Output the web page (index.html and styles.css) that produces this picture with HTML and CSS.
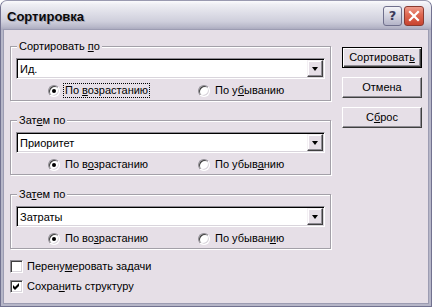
FILE: index.html
```html
<!DOCTYPE html>
<html lang="ru">
<head>
<meta charset="utf-8">
<title>Сортировка</title>
<link rel="stylesheet" href="styles.css">
</head>
<body>
<div class="window">
  <div class="titlebar">
    <span class="title">Сортировка</span>
    <div class="caption-buttons">
      <span class="cbtn help">?</span>
      <span class="cbtn close"><svg width="12" height="12" viewBox="0 0 12 12"><path d="M2 2 L10 10 M10 2 L2 10" stroke="#fff" stroke-width="2.2" stroke-linecap="square"/></svg></span>
    </div>
  </div>
  <div class="client">
    <div class="left">
      <fieldset class="group">
        <legend>Сортировать <u>п</u>о</legend>
        <div class="combo"><span class="combo-text">Ид.</span><span class="drop"><i class="tri"></i></span></div>
        <div class="radios">
          <label class="opt first"><span class="radio on"></span><span class="focus">По <u>в</u>озрастанию</span></label>
          <label class="opt"><span class="radio"></span><span class="txt">По у<u>б</u>ыванию</span></label>
        </div>
      </fieldset>
      <fieldset class="group">
        <legend>Зат<u>е</u>м по</legend>
        <div class="combo"><span class="combo-text">Приоритет</span><span class="drop"><i class="tri"></i></span></div>
        <div class="radios">
          <label class="opt first"><span class="radio on"></span><span class="txt">По в<u>о</u>зрастанию</span></label>
          <label class="opt"><span class="radio"></span><span class="txt">По убыв<u>а</u>нию</span></label>
        </div>
      </fieldset>
      <fieldset class="group">
        <legend>За<u>т</u>ем по</legend>
        <div class="combo"><span class="combo-text">Затраты</span><span class="drop"><i class="tri"></i></span></div>
        <div class="radios">
          <label class="opt first"><span class="radio on"></span><span class="txt">По во<u>з</u>растанию</span></label>
          <label class="opt"><span class="radio"></span><span class="txt">По убыван<u>и</u>ю</span></label>
        </div>
      </fieldset>
      <div class="checks">
        <label class="chk"><span class="box"></span><span class="txt">Перену<u>м</u>еровать задачи</span></label>
        <label class="chk"><span class="box on"><svg width="7" height="7" viewBox="0 0 7 7"><path d="M0 2 L2 4 L6 0 L6 3 L2 7 L0 5 Z" fill="#000"/></svg></span><span class="txt">Сохра<u>н</u>ить структуру</span></label>
      </div>
    </div>
    <div class="right">
      <button class="btn default">Сортироват<u>ь</u></button>
      <button class="btn">Отмена</button>
      <button class="btn">С<u>б</u>рос</button>
    </div>
  </div>
</div>
</body>
</html>
```

FILE: styles.css
```css
html, body {
  margin: 0;
  padding: 0;
  background: #ffffff;
}

body {
  font-family: "Liberation Sans", Arial, sans-serif;
  font-size: 11px;
  color: #000;
}

.window {
  width: 432px;
  height: 307px;
  box-sizing: border-box;
  border: 1px solid #727290;
  border-top-color: #9a9ab0;
  border-radius: 7px 7px 0 0;
  background: #b6b6c8;
  display: flex;
  flex-direction: column;
  overflow: hidden;
}

.titlebar {
  height: 29px;
  flex: none;
  display: flex;
  align-items: center;
  justify-content: space-between;
  padding: 0 7px 0 6px;
  background: linear-gradient(#fbfbfd 0%, #eeeef3 12%, #dcdce6 45%, #cfcfdc 70%, #babacb 88%, #a6a6bb 100%);
}

.title {
  font-family: "Liberation Sans", Arial, sans-serif;
  font-weight: bold;
  font-size: 13px;
  color: #0a0a0a;
  text-shadow: 1px 1px 0 #a8a8b8;
  padding-top: 1px;
}

.caption-buttons {
  display: flex;
  gap: 2px;
}

.cbtn {
  width: 19px;
  height: 20px;
  box-sizing: border-box;
  border-radius: 3px;
  display: flex;
  align-items: center;
  justify-content: center;
}

.help {
  border: 1px solid #6f6f8c;
  background: linear-gradient(#f4f4f8 0%, #d6d6e2 45%, #b4b4c8 100%);
  color: #3a3a5a;
  font-family: "DejaVu Sans", sans-serif;
  font-weight: bold;
  font-size: 13px;
  line-height: 1;
}

.close {
  width: 20px;
  border: 1px solid #8a3a30;
  background: linear-gradient(#ee9c8c 0%, #e06a54 40%, #c84430 100%);
}

.client {
  flex: 1;
  margin: 0 3px 3px;
  background: #e6dfe7;
  box-shadow: 0 0 0 1px #9c9cb2;
  display: flex;
  padding: 0 6px;
}

.left {
  width: 322px;
  padding-top: 10px;
  display: flex;
  flex-direction: column;
}

.group {
  margin: 0 0 13px 0;
  padding: 5px 4px 3px 5px;
  width: 321px;
  box-sizing: border-box;
  border: 1px solid #a3a0a8;
  box-shadow: inset 1px 1px 0 #ffffff, 1px 1px 0 #ffffff;
  min-width: 0;
}

.group legend {
  padding: 0 2px;
  margin-left: 1px;
  line-height: 13px;
  height: 13px;
  background: #e6dfe7;
}

.combo {
  height: 21px;
  width: 309px;
  box-sizing: border-box;
  background: #fff;
  border: 1px solid;
  border-color: #8f8c94 #ffffff #ffffff #8f8c94;
  box-shadow: inset 1px 1px 0 #000000, inset -1px -1px 0 #d9d5dc;
  display: flex;
  align-items: center;
  justify-content: space-between;
  padding: 1px;
}

.combo-text {
  padding-left: 2px;
  padding-top: 1px;
  line-height: 13px;
}

.drop {
  width: 16px;
  height: 17px;
  box-sizing: border-box;
  background: #e6dfe7;
  border: 1px solid;
  border-color: #f4f0f4 #404040 #404040 #f4f0f4;
  box-shadow: inset -1px -1px 0 #8f8c94, inset 1px 1px 0 #ffffff;
  display: flex;
  align-items: center;
  justify-content: center;
}

.tri {
  width: 0;
  height: 0;
  border-left: 3.5px solid transparent;
  border-right: 3.5px solid transparent;
  border-top: 4px solid #000;
  margin-top: 1px;
}

.radios {
  display: flex;
  margin-top: 5px;
  padding-left: 32px;
  height: 13px;
  align-items: center;
}

.opt {
  display: flex;
  align-items: center;
  gap: 5px;
}

.opt.first {
  width: 150px;
}

.radio {
  width: 12px;
  height: 12px;
  box-sizing: border-box;
  border-radius: 50%;
  background: #fff;
  border: 1px solid;
  border-color: #8f8c94 #ffffff #ffffff #8f8c94;
  box-shadow: inset 1px 1px 0 #404040, inset -1px -1px 0 #d9d5dc;
  position: relative;
  flex: none;
}

.radio.on::after {
  content: "";
  position: absolute;
  left: 3px;
  top: 3px;
  width: 4px;
  height: 4px;
  border-radius: 50%;
  background: #000;
}

.focus, .txt {
  line-height: 13px;
}

.focus {
  outline: 1px dotted #000;
  outline-offset: 0px;
  padding: 0 1px;
  margin-left: -1px;
}

.checks {
  display: flex;
  flex-direction: column;
  gap: 7px;
  margin-top: -2px;
}

.chk {
  display: flex;
  align-items: center;
  gap: 4px;
  height: 13px;
}

.box {
  width: 13px;
  height: 13px;
  box-sizing: border-box;
  background: #fff;
  border: 1px solid;
  border-color: #8f8c94 #ffffff #ffffff #8f8c94;
  box-shadow: inset 1px 1px 0 #404040, inset -1px -1px 0 #d9d5dc;
  display: flex;
  align-items: center;
  justify-content: center;
  flex: none;
}

.right {
  margin-left: 10px;
  padding-top: 17px;
  display: flex;
  flex-direction: column;
  gap: 9px;
}

.btn {
  width: 80px;
  height: 21px;
  box-sizing: border-box;
  font-family: "Liberation Sans", Arial, sans-serif;
  font-size: 11px;
  color: #000;
  background: #e6dfe7;
  border: 1px solid;
  border-color: #ffffff #404040 #404040 #ffffff;
  box-shadow: inset -1px -1px 0 #8f8c94;
  padding: 0;
  margin: 0;
  line-height: 13px;
}

.btn.default {
  border: 1px solid #000;
  box-shadow: inset 1px 1px 0 #ffffff, inset -1px -1px 0 #404040, inset -2px -2px 0 #8f8c94;
}

u {
  text-decoration: underline;
  text-underline-offset: 1px;
}
```
